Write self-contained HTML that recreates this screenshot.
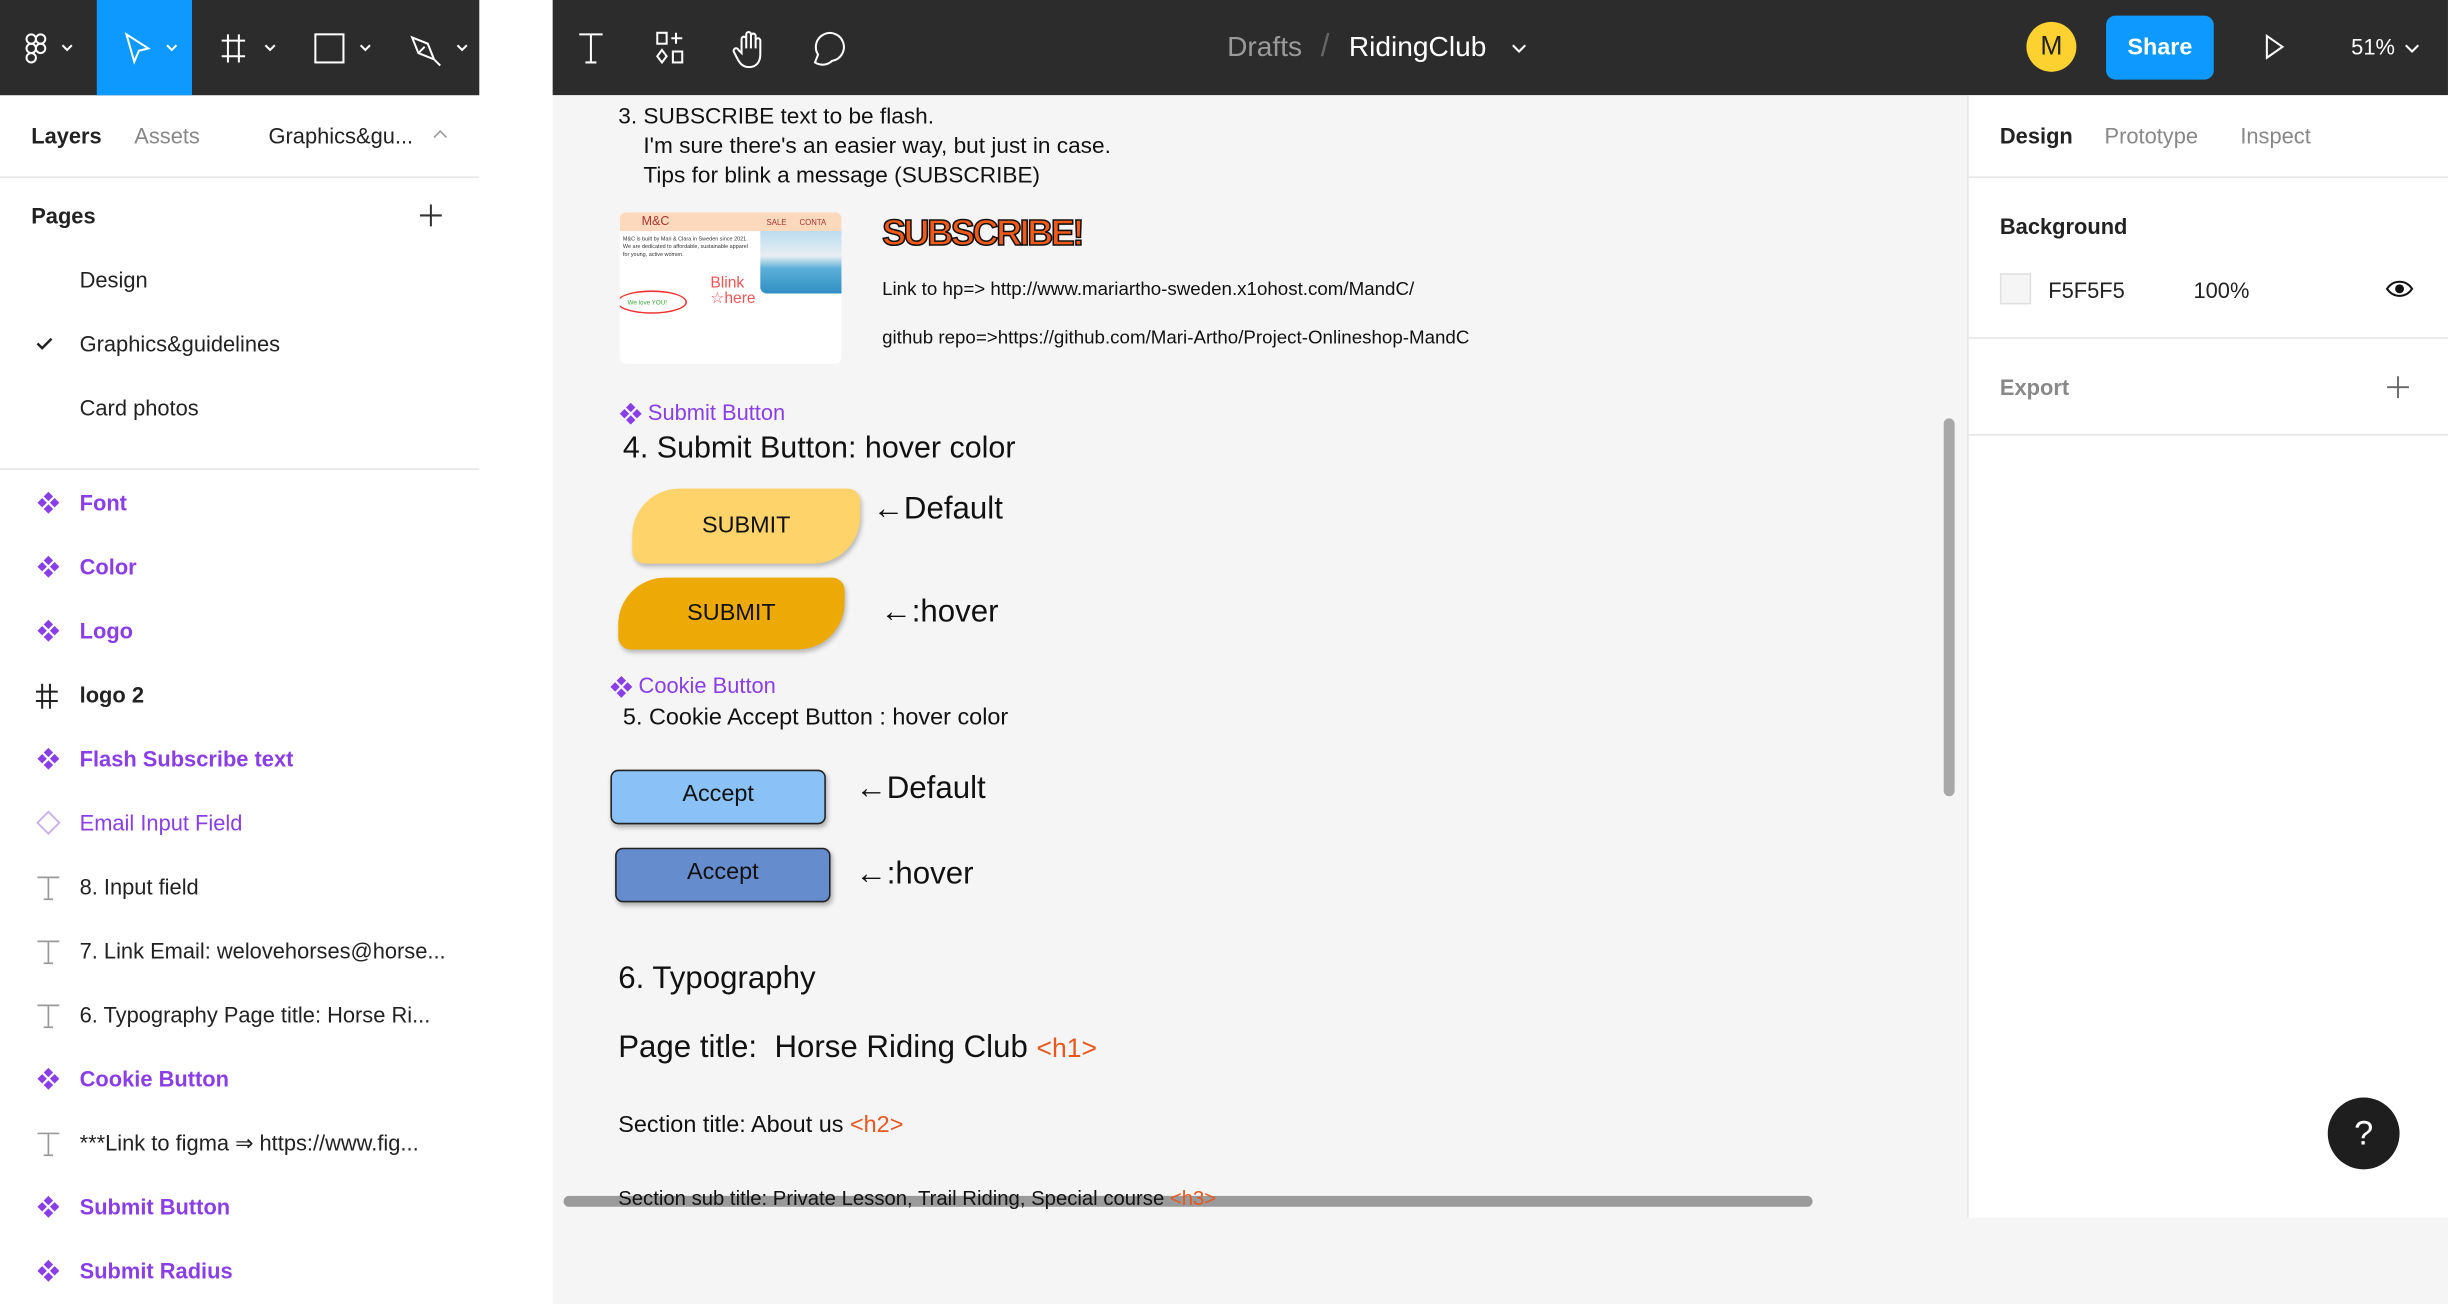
<!DOCTYPE html>
<html><head><meta charset="utf-8"><style>
*{margin:0;padding:0;box-sizing:border-box}
html,body{width:2448px;height:1304px;overflow:hidden;background:#fff}
#w{width:1568px;height:836px;transform:scale(1.5612);transform-origin:0 0;position:relative;font-family:"Liberation Sans",sans-serif;background:#fff}
.a{position:absolute;white-space:nowrap}
.top{position:absolute;left:0;top:0;height:61px;background:#2c2c2c}
.lp{font-size:14px;color:#222}
.pur{color:#8a3ee6}
.cv{position:absolute;left:354px;top:61px;width:906px;height:775px;background:#f5f5f5;overflow:hidden}
.c{font-size:14.5px;color:#111}
svg{position:absolute}
</style></head><body><div id="w">
<div class="top" style="width:307px"></div>
<div style="position:absolute;left:62px;top:0;width:61px;height:61px;background:#0d99ff"></div>
<div class="top" style="left:354px;width:1214px"></div>
<svg style="left:0;top:0" width="1568" height="61" fill="none" stroke="#fff" stroke-width="1.3">
<g><rect x="17" y="22" width="6" height="6" rx="3"/><rect x="23" y="22" width="6" height="6" rx="3"/><rect x="17" y="28" width="6" height="6" rx="3"/><circle cx="26" cy="31" r="3"/><rect x="17" y="34" width="6" height="6" rx="3"/></g>
<path d="M40 29l3 3 3-3"/>
<path d="M81 22l14 9-6 1.5-3 7z"/><path d="M107 29l3 3 3-3"/>
<path d="M146 22v18M153 22v18M142 26h15M142 36h15"/><path d="M170 29l3 3 3-3"/>
<rect x="202" y="22" width="18" height="18"/><path d="M231 29l3 3 3-3"/>
<path d="M264 24l10 4 4 10-10-4zM268 34l4-4M278 38l4 4"/><path d="M293 29l3 3 3-3"/>
<path d="M371 22h15M378.5 22v18M375 40h7"/>
<rect x="421" y="21" width="6" height="7"/><path d="M433 21v7M430 24.5h7M424 32l3 4-3 4-3-4z"/><rect x="431" y="33" width="6" height="7"/>
<path d="M475 34v-9a1.5 1.5 0 013 0v6v-9a1.5 1.5 0 013 0v9v-8a1.5 1.5 0 013 0v8v-5a1.5 1.5 0 013 0v9c0 5-3 8-7 8s-6-2-8-6l-2-4a1.5 1.5 0 013-1z"/>
<path d="M522 40l2-5a9 9 0 119 4a9 9 0 01-11 1z"/>
<path d="M969 29l4 4 4-4"/>
<path d="M1452 23l10 7-10 7z"/>
<path d="M1541 29l4 4 4-4"/>
</svg>
<div class="a" style="left:786px;top:20px;font-size:18px;color:#9a9a9a">Drafts</div>
<div class="a" style="left:846px;top:19px;font-size:20px;color:#666">/</div>
<div class="a" style="left:864px;top:20px;font-size:18px;color:#fff">RidingClub</div>
<div style="position:absolute;left:1298px;top:14px;width:32px;height:32px;border-radius:50%;background:#fcd130;color:#222;font-size:17px;text-align:center;line-height:32px">M</div>
<div style="position:absolute;left:1349px;top:10px;width:69px;height:41px;border-radius:6px;background:#0d99ff;color:#fff;font-size:15px;font-weight:bold;text-align:center;line-height:41px">Share</div>
<div class="a" style="left:1506px;top:22px;font-size:14px;color:#fff">51%</div>

<div class="a lp" style="left:20px;top:79px;font-weight:bold">Layers</div>
<div class="a lp" style="left:86px;top:79px;color:#888">Assets</div>
<div class="a lp" style="left:172px;top:79px">Graphics&amp;gu...</div>
<svg style="left:276px;top:82px" width="12" height="8" fill="none" stroke="#999"><path d="M2 6l4-4 4 4"/></svg>
<div style="position:absolute;left:0;top:113px;width:307px;height:1px;background:#e5e5e5"></div>
<div class="a lp" style="left:20px;top:130px;font-weight:bold">Pages</div>
<svg style="left:268px;top:130px" width="16" height="16" stroke="#333" stroke-width="1.3"><path d="M8 1v14M1 8h14"/></svg>
<div class="a lp" style="left:51px;top:171px">Design</div>
<svg style="left:22px;top:214px" width="12" height="12" fill="none" stroke="#222" stroke-width="1.6"><path d="M2 6l3 3 6-6"/></svg>
<div class="a lp" style="left:51px;top:212px">Graphics&amp;guidelines</div>
<div class="a lp" style="left:51px;top:253px">Card photos</div>
<div style="position:absolute;left:0;top:300px;width:307px;height:1px;background:#e5e5e5"></div>
<svg style="left:0;top:300px" width="50" height="536">
<defs><g id="ci" fill="#8a3ee6"><path d="M7 0l3 3-3 3-3-3zM7 8l3 3-3 3-3-3zM3 4l3 3-3 3-3-3zM11 4l3 3-3 3-3-3z"/></g></defs>
<use href="#ci" x="24" y="15"/><use href="#ci" x="24" y="56"/><use href="#ci" x="24" y="97"/>
<path d="M27 138v16M32 138v16M23 143h14M23 149h14" stroke="#222" stroke-width="1.3"/>
<use href="#ci" x="24" y="179"/>
<path d="M31 220l7 7-7 7-7-7z" fill="none" stroke="#c8b0ea" stroke-width="1.2"/>
<g stroke="#999" stroke-width="1.1" fill="none"><path d="M24 262h14M31 262v14M28 276h6"/><path d="M24 303h14M31 303v14M28 317h6"/><path d="M24 344h14M31 344v14M28 358h6"/><path d="M24 426h14M31 426v14M28 440h6"/></g>
<use href="#ci" x="24" y="384"/><use href="#ci" x="24" y="466"/><use href="#ci" x="24" y="507"/>
</svg>
<div class="a lp pur" style="left:51px;top:314px;font-weight:bold">Font</div>
<div class="a lp pur" style="left:51px;top:355px;font-weight:bold">Color</div>
<div class="a lp pur" style="left:51px;top:396px;font-weight:bold">Logo</div>
<div class="a lp" style="left:51px;top:437px;font-weight:bold">logo 2</div>
<div class="a lp pur" style="left:51px;top:478px;font-weight:bold">Flash Subscribe text</div>
<div class="a lp pur" style="left:51px;top:519px">Email Input Field</div>
<div class="a lp" style="left:51px;top:560px">8. Input field</div>
<div class="a lp" style="left:51px;top:601px">7. Link Email: welovehorses@horse...</div>
<div class="a lp" style="left:51px;top:642px">6. Typography Page title: Horse Ri...</div>
<div class="a lp pur" style="left:51px;top:683px;font-weight:bold">Cookie Button</div>
<div class="a lp" style="left:51px;top:724px">***Link to figma ⇒ https://www.fig...</div>
<div class="a lp pur" style="left:51px;top:765px;font-weight:bold">Submit Button</div>
<div class="a lp pur" style="left:51px;top:806px;font-weight:bold">Submit Radius</div>

<div class="cv">
<div style="position:absolute;left:7px;top:705px;width:800px;height:7px;border-radius:4px;background:#9a9a9a"></div>
<div class="a c" style="left:42px;top:5px;line-height:19px">3. SUBSCRIBE text to be flash.<br>&nbsp;&nbsp;&nbsp;&nbsp;I'm sure there's an easier way, but just in case.<br>&nbsp;&nbsp;&nbsp;&nbsp;Tips for blink a message (SUBSCRIBE)</div>
<div style="position:absolute;left:43px;top:75px;width:142px;height:97px;background:#fff;border-radius:4px;overflow:hidden">
<div style="height:12px;background:#fcd9bd;font-size:8px;color:#a33;padding-left:14px;line-height:12px">M&amp;C <span style="margin-left:60px;font-size:5px">SALE &nbsp;&nbsp;&nbsp;&nbsp; CONTA</span></div>
<div style="position:absolute;left:90px;top:12px;width:52px;height:40px;background:linear-gradient(#bcdcf0,#e8eef2 40%,#5bb0d8 60%,#2f8ec4);border-radius:0 0 0 4px"></div>
<div style="position:absolute;left:2px;top:15px;width:85px;font-size:3.5px;line-height:5px;color:#333;white-space:normal">M&amp;C is built by Mari &amp; Clara in Sweden since 2021. We are dedicated to affordable, sustainable apparel for young, active women.</div>
<div style="position:absolute;left:-2px;top:50px;width:45px;height:15px;border:1px solid #e33;border-radius:50%;font-size:4px;color:#3a3;padding:4px 0 0 6px">We love YOU!</div>
<div style="position:absolute;left:58px;top:41px;font-size:10px;color:#e55;line-height:10px">Blink<br>☆here</div>
</div>
<div class="a" style="left:211px;top:75px;font-size:23px;font-weight:bold;color:#f25a1a;letter-spacing:-1.5px;-webkit-text-stroke:1px #111">SUBSCRIBE!</div>
<div class="a" style="left:211px;top:117px;font-size:12px;color:#111">Link to hp=&gt; http://www.mariartho-sweden.x1ohost.com/MandC/</div>
<div class="a" style="left:211px;top:148px;font-size:12px;color:#111">github repo=&gt;https://github.com/Mari-Artho/Project-Onlineshop-MandC</div>
<svg style="left:43px;top:197px" width="14" height="14"><use href="#ci"/></svg>
<div class="a pur" style="left:61px;top:195px;font-size:14px">Submit Button</div>
<div class="a" style="left:45px;top:215px;font-size:19.5px;color:#111">4. Submit Button: hover color</div>
<div style="position:absolute;left:51px;top:252px;width:146px;height:48px;background:#fdd36a;border-radius:30px 8px 30px 8px;box-shadow:1px 2px 3px rgba(0,0,0,.25);text-align:center;line-height:48px;font-size:15px;color:#111">SUBMIT</div>
<div class="a" style="left:205px;top:254px;font-size:20px;color:#111">←Default</div>
<div style="position:absolute;left:42px;top:309px;width:145px;height:46px;background:#edaa06;border-radius:30px 8px 30px 8px;box-shadow:1px 2px 3px rgba(0,0,0,.25);text-align:center;line-height:46px;font-size:15px;color:#111">SUBMIT</div>
<div class="a" style="left:210px;top:320px;font-size:20px;color:#111">←:hover</div>
<svg style="left:37px;top:372px" width="14" height="14"><use href="#ci"/></svg>
<div class="a pur" style="left:55px;top:370px;font-size:14px">Cookie Button</div>
<div class="a" style="left:45px;top:390px;font-size:15px;color:#111">5. Cookie Accept Button : hover color</div>
<div style="position:absolute;left:37px;top:432px;width:138px;height:35px;background:#8ac2f7;border:1px solid #222;border-radius:5px;box-shadow:1px 2px 3px rgba(0,0,0,.3);text-align:center;line-height:30px;font-size:15px;color:#111">Accept</div>
<div class="a" style="left:194px;top:433px;font-size:20px;color:#111">←Default</div>
<div style="position:absolute;left:40px;top:482px;width:138px;height:35px;background:#658ccd;border:1px solid #222;border-radius:5px;box-shadow:1px 2px 3px rgba(0,0,0,.3);text-align:center;line-height:30px;font-size:15px;color:#111">Accept</div>
<div class="a" style="left:194px;top:488px;font-size:20px;color:#111">←:hover</div>
<div class="a" style="left:42px;top:555px;font-size:20px;color:#111">6. Typography</div>
<div class="a" style="left:42px;top:599px;font-size:20px;color:#111">Page title:&nbsp; Horse Riding Club <span style="color:#e8571e;font-size:17px">&lt;h1&gt;</span></div>
<div class="a" style="left:42px;top:651px;font-size:15px;color:#111">Section title: About us <span style="color:#e8571e">&lt;h2&gt;</span></div>
<div class="a" style="left:42px;top:699px;font-size:13px;color:#111">Section sub title: Private Lesson, Trail Riding, Special course <span style="color:#e8571e">&lt;h3&gt;</span></div>
<div style="position:absolute;left:891px;top:207px;width:7px;height:242px;border-radius:4px;background:#a8a8a8"></div>
</div>

<div style="position:absolute;left:1260px;top:61px;width:308px;height:719px;background:#fff;border-left:1px solid #e5e5e5"></div>
<div style="position:absolute;left:1260px;top:780px;width:308px;height:56px;background:#f5f5f5"></div>
<div class="a lp" style="left:1281px;top:79px;font-weight:bold">Design</div>
<div class="a lp" style="left:1348px;top:79px;color:#888">Prototype</div>
<div class="a lp" style="left:1435px;top:79px;color:#888">Inspect</div>
<div style="position:absolute;left:1261px;top:113px;width:307px;height:1px;background:#e5e5e5"></div>
<div class="a lp" style="left:1281px;top:137px;font-weight:bold">Background</div>
<div style="position:absolute;left:1281px;top:175px;width:20px;height:20px;background:#f5f5f5;border:1px solid #e0e0e0"></div>
<div class="a lp" style="left:1312px;top:178px">F5F5F5</div>
<div class="a lp" style="left:1405px;top:178px">100%</div>
<svg style="left:1527px;top:178px" width="20" height="14" fill="none" stroke="#111" stroke-width="1.3"><path d="M2 7c4-6 12-6 16 0c-4 6-12 6-16 0z"/><circle cx="10" cy="7" r="2.2" fill="#111"/></svg>
<div style="position:absolute;left:1261px;top:216px;width:307px;height:1px;background:#e5e5e5"></div>
<div class="a lp" style="left:1281px;top:240px;font-weight:bold;color:#888">Export</div>
<svg style="left:1528px;top:240px" width="16" height="16" stroke="#666" stroke-width="1.2"><path d="M8 1v14M1 8h14"/></svg>
<div style="position:absolute;left:1261px;top:278px;width:307px;height:1px;background:#e5e5e5"></div>
<div style="position:absolute;left:1491px;top:703px;width:46px;height:46px;border-radius:50%;background:#1e1e1e;color:#fff;font-size:22px;text-align:center;line-height:46px">?</div>
</div></body></html>
